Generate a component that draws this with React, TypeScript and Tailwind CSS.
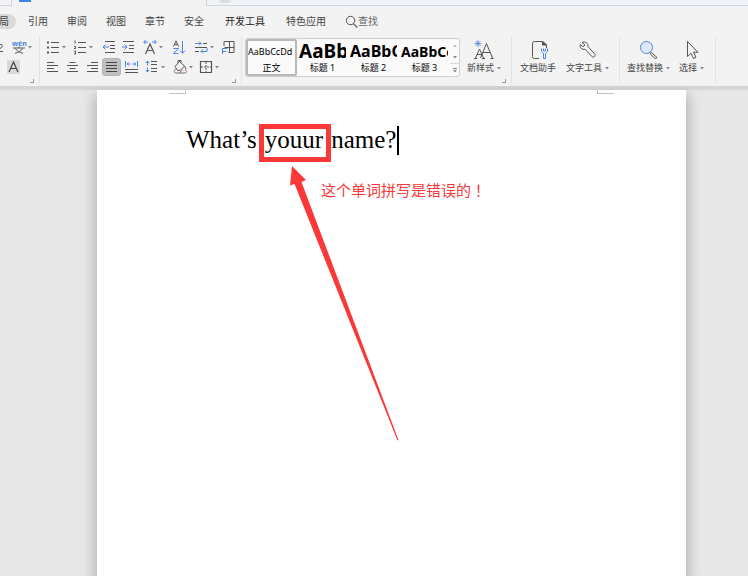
import { ReactNode } from "react";
import clsx from "clsx";

const MENUS = [
    { label: "引用", width: "w-[39px]" },
    { label: "审阅", width: "w-[39px]" },
    { label: "视图", width: "w-[39px]" },
    { label: "章节", width: "w-[39px]" },
    { label: "安全", width: "w-[41px]" },
    { label: "开发工具", width: "w-[61px]", strong: true },
    { label: "特色应用", width: "w-[60px]" },
];

const STYLES = [
    { name: "正文", sample: "AaBbCcDd", size: "text-[9px]", active: true },
    { name: "标题 1", sample: "AaBb", size: "text-[19px] font-bold" },
    { name: "标题 2", sample: "AaBbC", size: "text-[16px] font-bold" },
    { name: "标题 3", sample: "AaBbCc", size: "text-[14px] font-bold" },
];

const BLUE = "#4a86dc";

export default function App() {
    return (
        <div className="flex min-h-screen flex-col overflow-hidden bg-[#e7e7e7] font-['Noto_Sans','Noto_Sans_CJK_SC',sans-serif] text-[#444]">
            <TitleStrip />

            <header className="border-b-4 border-[#d5d6d6] bg-[#f3f3f3]">
                <MenuBar />
                <Ribbon />
            </header>

            <Document />
        </div>
    );
}

/* ---------- TOPO ---------- */

function TitleStrip() {
    return (
        <div className="flex h-[6px] overflow-hidden bg-[#f3f3f3]">
            <div className="w-[12px] border-r border-b border-[#cdd3e2] bg-[#f0f2f8]" />
            <div className="w-[194px] pl-[7px]">
                <div className="h-[2px] w-[12px] bg-[#3f83ee]" />
            </div>
            <div className="flex-1 border-b border-l border-[#cdd3e2] bg-[#f0f2f8] pl-[12px]">
                <div className="h-[3px] w-[12px] rounded-b-full bg-[#dcdde1]" />
            </div>
        </div>
    );
}

function MenuBar() {
    return (
        <nav className="flex h-[30px] items-center text-[10px] whitespace-nowrap">
            <button className="mr-[8px] h-[15px] w-[16px] overflow-hidden rounded-r-full bg-[#d9d9d9]">
                <span className="float-right pr-[7px] leading-[15px]">布局</span>
            </button>

            {MENUS.map((m) => (
                <button key={m.label} className={clsx("flex h-full items-center justify-start pl-[4px]", m.width, m.strong && "text-[#222]")}>
                    {m.label}
                </button>
            ))}

            <button className="ml-[3px] flex items-center text-[#666]">
                <svg width="13" height="13" viewBox="0 0 13 13" fill="none" stroke="#555">
                    <circle cx="5.5" cy="5.5" r="4.2" />
                    <path d="M8.5 8.7 12.3 12.5" strokeWidth="1.2" />
                </svg>
                查找
            </button>
        </nav>
    );
}

/* ---------- FAIXA DE OPÇÕES ---------- */

function Ribbon() {
    return (
        <div className="flex h-[50px]">
            <Group className="w-[40px] pt-px" corner>
                <div className="flex h-[20px] items-center">
                    <svg className="mr-[9px]" width="3" height="14" viewBox="0 0 3 14" fill="none" stroke="#555">
                        <path d="M0 4.5c3-1 3 3 0 4M0 11.5h3" />
                    </svg>
                    <Tool label="拼音指南" width="w-[22px]" caret>
                        <text x="0" y="5.5" fontSize="7" fontWeight="bold" fill={BLUE} stroke="none">wén</text>
                        <path d="M1 8h12M7 6.5V8M3.5 8.5c1 2.5 4 4 7.5 4.8M10.5 8.5c-1 2.5-4 4-7.5 4.8" />
                    </Tool>
                </div>
                <div className="flex h-[20px] items-center">
                    <button aria-label="字符底纹" className="ml-[7px] flex h-[14px] w-[13px] items-center justify-center bg-[#dadada]">
                        <svg width="11" height="12" viewBox="0 0 11 12" fill="none" stroke="#444" strokeWidth="1.2">
                            <path d="M1 11 5.5 1 10 11M2.7 7.5h5.6" />
                        </svg>
                    </button>
                </div>
            </Group>

            <Group className="w-[202px] pt-px pl-[6px]" corner>
                <div className="flex h-[20px] items-center">
                    <Tool label="项目符号" width="w-[27px]" caret>
                        <path d="M5 2.5h8M5 7.5h8M5 12.5h8" />
                        <path d="M1 2.5h2M1 7.5h2M1 12.5h2" strokeWidth="2" />
                    </Tool>
                    <Tool label="编号" width="w-[29px]" caret>
                        <path d="M5 2.5h8M5 7.5h8M5 12.5h8M2 .5v3M1 6.5h1.5v2H1M1 11h1.5v3H1" />
                    </Tool>
                    <Tool label="减少缩进" width="w-[19px]">
                        <path d="M3 1.5h10M8 5.5h5M8 8.5h5M3 12.5h10" />
                        <path d="M1 7h6M3.5 4.5 1 7l2.5 2.5" stroke={BLUE} />
                    </Tool>
                    <Tool label="增加缩进" width="w-[22px]">
                        <path d="M2 1.5h11M8 5.5h5M8 8.5h5M2 12.5h11" />
                        <path d="M1 7h5M3.5 4.5 6 7 3.5 9.5" stroke={BLUE} />
                    </Tool>
                    <Tool label="字符缩放" width="w-[29px]" caret>
                        <path d="M2.5 14 7 4l4.5 10M4 10.5h6" strokeWidth="1.2" />
                        <path d="M5 2H1M2.500 0 .7 2l1.800 2M9 2h4M11.500 0l1.800 2-1.800 2" stroke={BLUE} />
                    </Tool>
                    <Tool label="排序" width="w-[22px]">
                        <path d="M1.5 6.5 4 .8l2.5 5.7M2.3 4.5h3.4" />
                        <path d="M1.5 8.5h5l-5 5h5M10.5 1v12M8 10.5l2.5 2.8 2.5-2.8" stroke={BLUE} />
                    </Tool>
                    <Tool label="制表位" width="w-[27px]" caret>
                        <path d="M9 3.5h4M1 7.500h12M1 11.500h4" />
                        <path d="M1 3.500h6M5 1.500l2 2-2 2M13 8v3.500H7M9 9.500l-2 2 2 2" stroke={BLUE} />
                    </Tool>
                    <Tool label="文字排列" width="w-[14px]">
                        <path d="M3 6V1.500h10v11H7.500M8.500 1.500v11M3.500 7.500H13" />
                        <path d="M1.500 14V8.500h5M1.500 11.500h4" stroke={BLUE} />
                    </Tool>
                </div>
                <div className="flex h-[20px] items-center">
                    <Tool label="左对齐" width="w-[20px]">
                        <path d="M1 2.5h7M1 5.5h11M1 8.5h7M1 11.5h11" />
                    </Tool>
                    <Tool label="居中" width="w-[20px]">
                        <path d="M3.5 2.5h6M1 5.5h11M3.5 8.5h6M1 11.5h11" />
                    </Tool>
                    <Tool label="右对齐" width="w-[16px]">
                        <path d="M5 2.5h7M1 5.5h11M5 8.5h7M1 11.5h11" />
                    </Tool>
                    <button aria-label="两端对齐" className="mr-[4px] flex h-[18px] w-[19px] items-center justify-center rounded-[3px] border border-[#b4b4b4] bg-[#bfbfbf]">
                        <svg width="13" height="14" viewBox="0 0 13 14" fill="none" stroke="#444">
                            <path d="M1 2.5h11M1 5.5h11M1 8.5h11M1 11.5h11" />
                        </svg>
                    </button>
                    <Tool label="分散对齐" width="w-[20px]">
                        <path d="M0 9.5h13M0 12.5h13" />
                        <path d="M.5 1v6M12.5 1v6M2 4h3.500M3.500 2.500 2 4l1.500 1.500M7.500 4H11M9.500 2.500 11 4 9.500 5.500" stroke={BLUE} />
                    </Tool>
                    <Tool label="行距" width="w-[28px]" caret>
                        <path d="M6 1.5h6M6 4.5h6M6 8.5h6M6 11.5h6" />
                        <path d="M2.5 1v4.5M.8 3l1.7-2 1.7 2M2.5 7.5V12M.8 10l1.7 2 1.700-2" stroke={BLUE} />
                    </Tool>
                    <Tool label="底纹颜色" width="w-[26px]" caret>
                        <path d="M2 6.5 6.5 1.5 11.5 6 7 10.5H4.5zM5 3V.5h3v2M11.5 6l1.500 3" />
                        <path d="M3 9.5c-3 1-2 3.5 0 3.5h9c2 0 2-3 0-3" stroke="#777" />
                        <path d="M6 13 9.5 10" stroke="#e05050" />
                    </Tool>
                    <Tool label="边框" width="w-[22px]" caret>
                        <path d="M1.5 1.5h11v11h-11z" strokeWidth="1.2" />
                        <path d="M7 2v10M2 7h10" strokeDasharray="2 1" />
                    </Tool>
                </div>
            </Group>

            <Group className="w-[270px] pl-[3px]" corner>
                <div className="flex">
                    <StyleGallery />
                    <BigTool label="新样式" className="ml-[7px]" caret>
                        <path d="M3.5 18 7.5 9l4 9M5 14.5h5M8.5 18 14.5 3.5l6 14.500M11 12.500h7M2 18.500h3M10 18.500h3M18.500 18.500h3" />
                        <path d="M6 0v7M2.500 3.500h7M3.500 1l5 5M8.500 1l-5 5" stroke={BLUE} strokeWidth=".8" />
                    </BigTool>
                </div>
            </Group>

            <Group className="w-[108px] pl-[8px]">
                <div className="flex gap-[10px]">
                    <BigTool label="文档助手">
                        <path d="M10 18.5H5.5a2 2 0 0 1-2-2v-13a2 2 0 0 1 2-2H14l3.500 3.500v3" />
                        <path d="M13.500 1.500V5h4z" fill="#444" />
                        <path d="M12.500 8.500v3l2 2v5h2v-5l2-2v-3M14.500 8.500v2.500h2V8.500" stroke={BLUE} />
                    </BigTool>
                    <BigTool label="文字工具" caret>
                        <path d="M7 2.500c3-1.500 6.500.5 6 4.200l6.500 7c1.700 2-.8 4.500-2.700 2.800l-6.500-7.200C7 10 4.300 7.500 5.200 4.500L8 6.800l2-1.800z" />
                    </BigTool>
                </div>
            </Group>

            <Group className="w-[96px] pl-[7px]">
                <div className="flex gap-[9px]">
                    <BigTool label="查找替换" caret>
                        <path d="m15.500 12.500 5.500 5-1.500 1.500-5.500-5.500z" />
                        <circle cx="10.500" cy="7.500" r="6" stroke={BLUE} fill="#dfe8f5" />
                    </BigTool>
                    <BigTool label="选择" caret>
                        <path d="M3.500 1.500v15l3.500-3.200 2.500 5.200 2.500-1.200-2.500-5h4.500z" />
                    </BigTool>
                </div>
            </Group>
        </div>
    );
}

function StyleGallery() {
    return (
        <div className="mt-[2px] flex h-[39px] w-[215px] rounded-[3px] border border-[#cecece] bg-[#fafafa]">
            {STYLES.map((s) => (
                <button
                    key={s.name}
                    className={clsx(
                        "flex w-[51px] shrink-0 flex-col items-center overflow-hidden text-black",
                        s.active ? "rounded-[2px] border-2 border-[#b8b8b8]" : "px-[2px] py-[2px]"
                    )}>
                    <span className={clsx("h-[21px] w-full overflow-hidden text-left leading-[21px] whitespace-nowrap", s.size)}>
                        {s.sample}
                    </span>
                    <span className="text-[9px] leading-[12px] whitespace-nowrap">{s.name}</span>
                </button>
            ))}

            <div className="flex flex-1 flex-col">
                <button aria-label="上一行" className="flex flex-1 items-center justify-center">
                    <Caret className="rotate-180 text-[#bbb]" />
                </button>
                <button aria-label="下一行" className="flex flex-1 items-center justify-center">
                    <Caret />
                </button>
                <button aria-label="更多样式" className="flex flex-1 flex-col items-center justify-center gap-px border-t border-[#d5d5d5]">
                    <span className="h-px w-[4px] bg-[#777]" />
                    <Caret />
                </button>
            </div>
        </div>
    );
}

/* ---------- DOCUMENTO ---------- */

function Document() {
    return (
        <main className="flex flex-1 pr-[62px] pl-[97px]">
            <article className="relative flex-1 bg-white px-[89px] shadow-[0_8px_12px_3px_rgba(0,0,0,0.22)]">
                <div className="-mx-[17px] flex justify-between">
                    <span className="h-[4px] w-[17px] border-r border-b border-[#c4c4c4]" />
                    <span className="h-[4px] w-[17px] border-b border-l border-[#c4c4c4]" />
                </div>

                <p className="mt-[31px] flex h-[30px] items-center font-['Liberation_Serif',serif] text-[25px] leading-[30px] whitespace-nowrap text-black">
                    <span>What’s</span>
                    <span className="relative ml-[8px]">
                        youur
                        <span className="absolute -top-[1px] -right-[8px] -left-[6px] h-[38px] border-[5px] border-[#fb3838]" />
                    </span>
                    <span className="ml-[8px]">name?</span>
                    <span className="ml-px h-[29px] w-[2px] bg-black" />
                </p>

                <p className="absolute top-[90px] left-[224px] text-[15px] leading-[20px] whitespace-nowrap text-[#fb3838]">
                    这个单词拼写是错误的<span className="font-['Noto_Sans_CJK_TC',sans-serif]">！</span>
                </p>
                <svg className="absolute top-[76px] left-[192px]" width="112" height="276" viewBox="0 0 112 276" fill="#fb3838">
                    <path d="M3 0 17 14 12.500 16 109.500 274 108.500 274.500 5.500 18 1 19.500z" />
                </svg>
            </article>
        </main>
    );
}

/* ---------- COMPONENTES ---------- */

function Group({ className, corner, children }: { className: string; corner?: boolean; children: ReactNode }) {
    return (
        <div className={clsx("relative mb-[2px] shrink-0 border-r border-[#e2e2e2]", className)}>
            {children}
            {corner && <span className="absolute right-[5px] bottom-[1px] h-[4px] w-[4px] border-r border-b border-[#999]" />}
        </div>
    );
}

function Caret({ className = "text-[#888]" }: { className?: string }) {
    return (
        <svg className={clsx("shrink-0", className)} width="4" height="3" viewBox="0 0 4 3" fill="currentColor">
            <path d="M0 0h4L2 2.500z" />
        </svg>
    );
}

function Tool({ label, width, caret, children }: { label: string; width: string; caret?: boolean; children: ReactNode }) {
    return (
        <button aria-label={label} className={clsx("flex shrink-0 items-center gap-[2px]", width)}>
            <svg className="shrink-0 overflow-visible" width="14" height="14" viewBox="0 0 14 14" fill="none" stroke="#555">
                {children}
            </svg>
            {caret && <Caret />}
        </button>
    );
}

function BigTool({ label, className, caret, children }: { label: string; className?: string; caret?: boolean; children: ReactNode }) {
    return (
        <button className={clsx("flex flex-col items-start pt-[3px] text-[9px] leading-[14px] whitespace-nowrap", className)}>
            <svg className={clsx(label.length > 3 ? "ml-[9px]" : "ml-[5px]")} width="22" height="22" viewBox="0 0 22 20" fill="none" stroke="#555">
                {children}
            </svg>
            <span className="flex items-center gap-[3px]">
                {label}
                {caret && <Caret />}
            </span>
        </button>
    );
}
